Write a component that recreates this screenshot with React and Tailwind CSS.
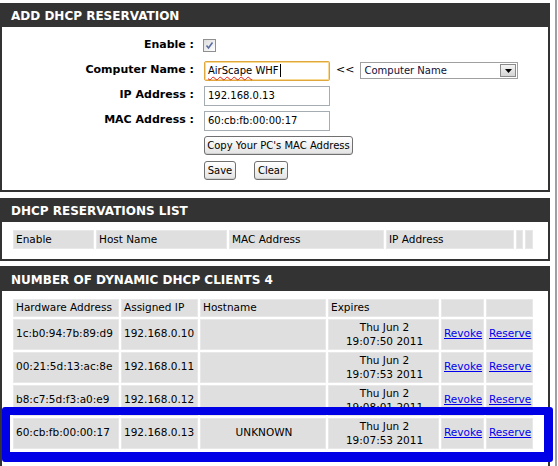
import React from "react";

function Header({ children, h = "h-[24px]" }) {
  return (
    <div className={`${h} bg-[#333333] text-white font-bold text-[12px] pl-[11px] pt-[2px] flex items-center font-['DejaVu_Sans',sans-serif]`}>
      {children}
    </div>
  );
}

function Btn({ children, w }) {
  return (
    <button
      className={`${w} h-[19px] rounded-[3px] border border-[#707070] bg-gradient-to-b from-[#ffffff] to-[#e3e3e3] text-[10px] leading-none text-black flex items-center justify-center shadow-[inset_0_-1px_0_#d0d0d0]`}
    >
      {children}
    </button>
  );
}

const cell = "bg-[#dfdfdf] border border-[#e8e8e8] p-0 pl-[2px] align-middle text-[10.5px]";

export default function App() {
  const clients = [
    { mac: "1c:b0:94:7b:89:d9", ip: "192.168.0.10", host: "", d: "19:07:50 2011" },
    { mac: "00:21:5d:13:ac:8e", ip: "192.168.0.11", host: "", d: "19:07:53 2011" },
    { mac: "b8:c7:5d:f3:a0:e9", ip: "192.168.0.12", host: "", d: "19:08:01 2011" },
    { mac: "60:cb:fb:00:00:17", ip: "192.168.0.13", host: "UNKNOWN", d: "19:07:53 2011" },
  ];
  return (
    <div className="relative h-[466px] w-[558px] overflow-hidden bg-white text-[11px] text-black font-['DejaVu_Sans',sans-serif]">
      <div className="w-[557px] h-full border-r-2 border-[#a0a0a0] pt-[3px]">
        {/* Section 1 */}
        <div className="w-[550px]">
          <Header>ADD DHCP RESERVATION</Header>
          <div className="border-x-2 border-b-2 border-[#333333] pt-[6px] pb-[7px]">
            <div className="h-[25px] flex items-center">
              <div className="w-[192px] text-right font-bold text-[11px]">Enable :</div>
              <div className="ml-[9px] w-[13px] h-[13px] border border-[#8e8f8f] bg-gradient-to-br from-[#dcdcdc] to-[#ffffff] flex items-center justify-center">
                <svg width="11" height="11" viewBox="0 0 11 11">
                  <path d="M2.5 5.5 L4.5 8 L8.5 2.5" fill="none" stroke="#5b6ea3" strokeWidth="1.6" />
                </svg>
              </div>
            </div>
            <div className="h-[25px] flex items-center">
              <div className="w-[192px] text-right font-bold text-[11px]">Computer Name :</div>
              <div className="ml-[10px] w-[126px] h-[20px] rounded-[2px] border border-[#e0a83c] shadow-[inset_0_0_0_1px_#f7d993] flex items-center px-[3px] text-[10px]">
                <span className="underline decoration-wavy decoration-[#e02020] decoration-1 underline-offset-2">AirScape</span>
                <span>&nbsp;WHF</span>
                <span className="inline-block w-px h-[13px] bg-black ml-px"></span>
              </div>
              <span className="ml-[6px] text-[11px]">&lt;&lt;</span>
              <div className="ml-[6px] w-[158px] h-[17px] border border-[#a0a0a0] flex items-center justify-between pl-[3px] pr-px text-[10px] text-[#10103a]">
                <span>Computer Name</span>
                <div className="w-[16px] h-[13px] border border-[#8a8a8a] bg-gradient-to-b from-[#f4f4f4] to-[#d4d4d4] flex items-end justify-center pb-[3px]">
                  <svg width="7" height="4" viewBox="0 0 7 4"><path d="M0 0 H7 L3.5 4 Z" fill="#000" /></svg>
                </div>
              </div>
            </div>
            <div className="h-[25px] flex items-center">
              <div className="w-[192px] text-right font-bold text-[11px]">IP Address :</div>
              <div className="ml-[10px] w-[126px] h-[20px] border border-[#a5acb2] flex items-center px-[3px] text-[10px]">192.168.0.13</div>
            </div>
            <div className="h-[25px] flex items-center">
              <div className="w-[192px] text-right font-bold text-[11px]">MAC Address :</div>
              <div className="ml-[10px] w-[126px] h-[20px] border border-[#a5acb2] flex items-center px-[3px] text-[10px]">60:cb:fb:00:00:17</div>
            </div>
            <div className="h-[25px] flex items-center">
              <div className="w-[192px]"></div>
              <div className="ml-[10px]"><Btn w="w-[149px]">Copy Your PC's MAC Address</Btn></div>
            </div>
            <div className="h-[25px] flex items-center">
              <div className="w-[192px]"></div>
              <div className="ml-[10px] flex gap-[18px]">
                <Btn w="w-[32px]">Save</Btn>
                <Btn w="w-[34px]">Clear</Btn>
              </div>
            </div>
          </div>
        </div>

        {/* Section 2 */}
        <div className="w-[550px] mt-[6px]">
          <Header>DHCP RESERVATIONS LIST</Header>
          <div className="border-x-2 border-b-2 border-[#333333] pt-[6px] pb-[8px] pl-[9px]">
            <table className="border-separate border-spacing-[2px] table-fixed w-[524px]">
              <colgroup>
                <col className="w-[81px]" />
                <col className="w-[131px]" />
                <col className="w-[155px]" />
                <col className="w-[128px]" />
                <col className="w-[7px]" />
                <col className="w-[8px]" />
              </colgroup>
              <tbody>
                <tr>
                  <td className={`${cell} h-[19px]`}>Enable</td>
                  <td className={cell}>Host Name</td>
                  <td className={cell}>MAC Address</td>
                  <td className={cell}>IP Address</td>
                  <td className={cell}></td>
                  <td className={cell}></td>
                </tr>
              </tbody>
            </table>
          </div>
        </div>

        {/* Section 3 */}
        <div className="w-[550px] mt-[5px]">
          <Header h="h-[25px]">NUMBER OF DYNAMIC DHCP CLIENTS 4</Header>
          <div className="border-x-2 border-[#333333] pt-[6px] pl-[9px] h-[200px]">
            <table className="border-separate border-spacing-[2px] table-fixed w-[524px]">
              <colgroup>
                <col className="w-[106px]" />
                <col className="w-[77px]" />
                <col className="w-[126px]" />
                <col className="w-[111px]" />
                <col className="w-[43px]" />
                <col className="w-[47px]" />
              </colgroup>
              <tbody>
                <tr>
                  <td className={`${cell} h-[17px] whitespace-nowrap`}>Hardware Address</td>
                  <td className={`${cell} whitespace-nowrap`}>Assigned IP</td>
                  <td className={cell}>Hostname</td>
                  <td className={cell}>Expires</td>
                  <td className={cell}></td>
                  <td className={cell}></td>
                </tr>
                {clients.map((c) => (
                  <tr key={c.mac}>
                    <td className={`${cell} h-[31px] whitespace-nowrap`}>{c.mac}</td>
                    <td className={`${cell} whitespace-nowrap`}>{c.ip}</td>
                    <td className={`${cell} text-center`}>{c.host}</td>
                    <td className={`${cell} text-center leading-[14px]`}>
                      Thu Jun 2<br />
                      {c.d}
                    </td>
                    <td className={cell}>
                      <a href="#" className="text-[#0000ee] underline">Revoke</a>
                    </td>
                    <td className={cell}>
                      <a href="#" className="text-[#0000ee] underline">Reserve</a>
                    </td>
                  </tr>
                ))}
              </tbody>
            </table>
          </div>
        </div>
      </div>

      {/* highlight annotation */}
      <div className="absolute left-[2px] top-[407px] w-[551px] h-[55px] border-t-8 border-l-8 border-r-[9px] border-b-[10px] border-[#0000e6] rounded-[3px] pointer-events-none"></div>
    </div>
  );
}
